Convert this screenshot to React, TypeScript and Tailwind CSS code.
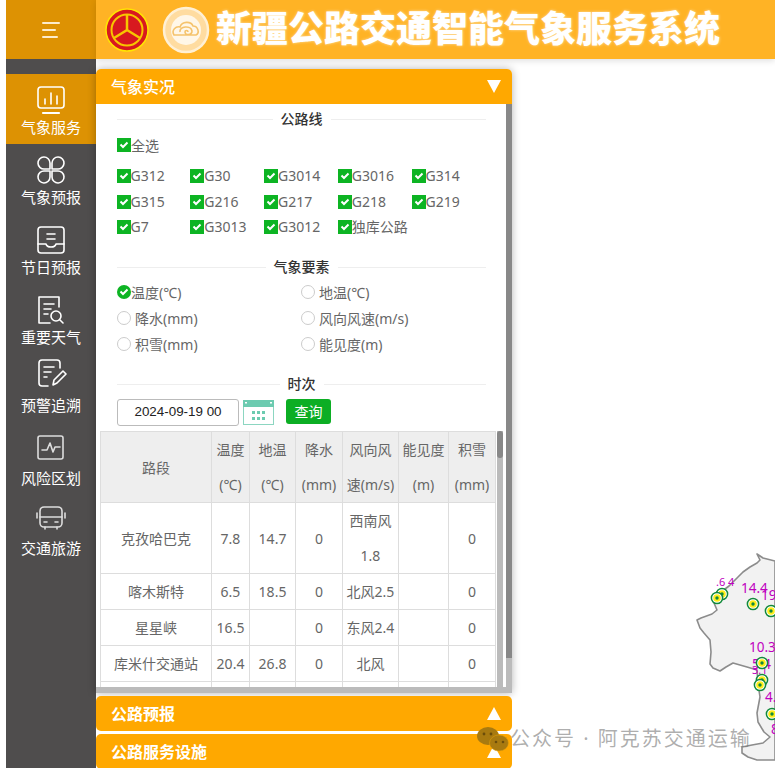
const cjk = "font-['Noto_Sans','Noto_Sans_CJK_SC',sans-serif]";

const MenuIcon = ({ name }: { name: string }) => {
  const common = { width: 32, height: 32, viewBox: "0 0 32 32", fill: "none", stroke: "#fff", strokeWidth: 1.6, strokeLinecap: "round" as const, strokeLinejoin: "round" as const };
  if (name === "chart")
    return (
      <svg {...common}>
        <rect x="3" y="3" width="26" height="21" rx="3" />
        <path d="M10 20v-5M16 20V9M22 20v-8" />
        <path d="M8 29h16" strokeWidth="2.2" />
      </svg>
    );
  if (name === "clover")
    return (
      <svg {...common}>
        <path d="M15 15H9.5a6 6 0 1 1 5.5-6z" />
        <path d="M17 15h5.5a6 6 0 1 0-5.5-6z" />
        <path d="M15 17H9.5a6 6 0 1 0 5.5 6z" />
        <path d="M17 17h5.5a6 6 0 1 1-5.5 6z" />
      </svg>
    );
  if (name === "tray")
    return (
      <svg {...common}>
        <rect x="3" y="3" width="26" height="26" rx="3" />
        <path d="M12 10h8M12 15h8M3 20h8c1 4 9 4 10 0h8" />
      </svg>
    );
  if (name === "search")
    return (
      <svg {...common}>
        <path d="M24 13V3H4v26h11" />
        <path d="M9 10h10M9 15h7M9 20h4" />
        <circle cx="21" cy="22" r="5" />
        <path d="M25 26l3 3" />
      </svg>
    );
  if (name === "edit")
    return (
      <svg {...common}>
        <path d="M25 11V6a3 3 0 0 0-3-3H7a3 3 0 0 0-3 3v20a3 3 0 0 0 3 3h6" />
        <path d="M9 10h10M9 15h7M9 20h3" />
        <path d="M18 28l1-5 9-9 3 3-9 9z" />
      </svg>
    );
  if (name === "pulse")
    return (
      <svg {...common} stroke="#ddd">
        <rect x="3" y="2" width="25" height="23" rx="2" />
        <path d="M7 16h5l3-7 3 9 2-5h5" />
      </svg>
    );
  return (
    <svg {...common} stroke="#ddd">
      <rect x="5" y="3" width="22" height="20" rx="4" />
      <path d="M5 13h22M2 9v5M30 9v5M10 23v2M22 23v2M9 18h3M20 18h3" />
    </svg>
  );
};

const menu = [
  { icon: "chart", label: "气象服务", active: true, pad: "pt-[10px]", gap: "mt-[1px]" },
  { icon: "clover", label: "气象预报", pad: "pt-[10px]", gap: "mt-[1px]" },
  { icon: "tray", label: "节日预报", pad: "pt-[10px]", gap: "mt-[1px]" },
  { icon: "search", label: "重要天气", pad: "pt-[10px]", gap: "mt-[1px]" },
  { icon: "edit", label: "预警追溯", pad: "pt-[3px]", gap: "mt-[6px]" },
  { icon: "pulse", label: "风险区划", pad: "pt-[10px]", gap: "mt-[2px]" },
  { icon: "bus", label: "交通旅游", pad: "pt-[10px]", gap: "mt-[2px]" },
];

const Check = () => (
  <span className="flex h-[14px] w-[14px] shrink-0 items-center justify-center bg-[#0db423]">
    <svg width="10" height="8" viewBox="0 0 10 8" fill="none" stroke="#fff" strokeWidth="2">
      <path d="M1.5 3.5L4 6l4.5-4.5" />
    </svg>
  </span>
);

const Item = ({ label }: { label: string }) => (
  <div className="flex w-[73.75px] items-center text-[14px] leading-[20px] text-[#666]">
    <Check />
    <span className="whitespace-nowrap">{label}</span>
  </div>
);

const Radio = ({ label, on }: { label: string; on?: boolean }) => (
  <div className="flex h-[26px] items-center text-[14px] text-[#666]">
    {on ? (
      <span className="flex h-[14px] w-[14px] items-center justify-center rounded-full bg-[#0db423]">
        <svg width="10" height="8" viewBox="0 0 10 8" fill="none" stroke="#fff" strokeWidth="2">
          <path d="M1.5 3.5L4 6l4.5-4.5" />
        </svg>
      </span>
    ) : (
      <span className="mr-[4px] h-[14px] w-[14px] rounded-full border border-[#ccc] bg-white" />
    )}
    <span className="whitespace-nowrap">{label}</span>
  </div>
);

const Legend = ({ title, cls }: { title: string; cls: string }) => (
  <div className={`flex items-center ${cls}`}>
    <div className="h-px flex-1 bg-[#eee]" />
    <span className="px-[8px] text-[14px] leading-[20px] font-medium text-[#333]">{title}</span>
    <div className="h-px flex-1 bg-[#eee]" />
  </div>
);

const rows = [
  ["克孜哈巴克", "7.8", "14.7", "0", "西南风 1.8", "", "0"],
  ["喀木斯特", "6.5", "18.5", "0", "北风2.5", "", "0"],
  ["星星峡", "16.5", "", "0", "东风2.4", "", "0"],
  ["库米什交通站", "20.4", "26.8", "0", "北风", "", "0"],
  ["", "", "", "", "", "", ""],
];

const heads = ["路段", "温度(℃)", "地温(℃)", "降水(mm)", "风向风速(m/s)", "能见度(m)", "积雪(mm)"];

const AccordionBar = ({ title }: { title: string }) => (
  <div className="flex h-[35px] items-center justify-between rounded-[5px] bg-[#ffa800] pr-[11px] pl-[15px]">
    <span className="text-[16px] font-bold text-white">{title}</span>
    <svg width="14" height="13" viewBox="0 0 14 13"><path d="M7 0l7 13H0z" fill="#fff" /></svg>
  </div>
);

const Marker = ({ x, y }: { x: number; y: number }) => (
  <g>
    <circle cx={x} cy={y} r="5.6" fill="#fff" stroke="#128a3c" strokeWidth="1.5" />
    <circle cx={x} cy={y} r="3.8" fill="#ffef1a" />
    <circle cx={x} cy={y} r="1.7" fill="#128a3c" />
  </g>
);

const MapLayer = () => (
  <svg className="absolute top-[510px] left-[560px]" width="215" height="258" viewBox="560 510 215 258">
    <path
      d="M757 554L763 558L775 561V760H757L748 757L742 753L742 747L752 745L763 743L770 737L764 732L758 722L757 713L760 697L758 684L757 670L747 667L733 663L726 667L720 671L713 668L710 664L711 652L710 640L704 633L700 628L697 620L701 618L712 614L717 610L714 603L712 597L718 593L725 589L729 586L733 582L738 577L743 572L750 567L757 563L760 560Z"
      fill="#f2f2f2"
      stroke="#8c8c8c"
      strokeWidth="1.6"
      strokeLinejoin="round"
    />
    <g fill="#c000c0" fontSize="13.5" fontFamily="Noto Sans, sans-serif">
      <text x="716" y="586" fontSize="11">.6 4</text>
      <text x="741" y="593">14.4</text>
      <text x="761" y="600">19</text>
      <text x="749" y="652">10.3</text>
      <text x="752" y="669">5.4</text>
      <text x="752" y="674" fontSize="11">3.1</text>
      <text x="765" y="702">4.</text>
      <text x="771" y="734">8</text>
    </g>
    <Marker x={722} y={594} />
    <Marker x={717} y={598} />
    <Marker x={753} y={604} />
    <Marker x={771} y={611} />
    <Marker x={762} y={663} />
    <Marker x={762} y={680} />
    <Marker x={760} y={685} />
    <Marker x={772} y={714} />
  </svg>
);

export default function App() {
  return (
    <div className={`relative flex h-[768px] w-[775px] overflow-hidden bg-white pl-[6px] ${cjk}`}>
      {/* Sidebar */}
      <aside className="w-[90px] shrink-0 bg-[#4f4d4d]">
        <div className="flex h-[59px] flex-col items-start justify-center gap-[5px] bg-[#dd9203] pl-[36px]">
          <span className="h-[2px] w-[18px] rounded bg-[#fdeccb]" />
          <span className="h-[2px] w-[14px] rounded bg-[#fdeccb]" />
          <span className="h-[2px] w-[16px] rounded bg-[#fdeccb]" />
        </div>
        <nav className="mt-[15px]">
          {menu.map((m) => (
            <div
              key={m.label}
              className={`flex h-[70px] flex-col items-center ${m.pad} ${m.active ? "bg-[#dd9203]" : ""}`}
            >
              <MenuIcon name={m.icon} />
              <span className={`${m.gap} text-[15px] leading-[20px] text-white`}>{m.label}</span>
            </div>
          ))}
        </nav>
      </aside>

      <main className="flex min-w-0 flex-1 flex-col">
        {/* Title bar */}
        <header className="flex h-[59px] shrink-0 items-center bg-[#ffb325] pl-[9px] shadow-[0_2px_6px_rgba(0,0,0,0.12)]">
          <svg width="44" height="44" viewBox="0 0 44 44">
            <circle cx="22" cy="22" r="21" fill="#d8191f" stroke="#ffe600" strokeWidth="1.5" />
            <circle cx="22" cy="22" r="15.5" fill="none" stroke="#f7c600" strokeWidth="2" />
            <path d="M22 7v15L9 30M22 22l13 8" fill="none" stroke="#f7c600" strokeWidth="2.5" />
          </svg>
          <svg className="ml-[13px]" width="48" height="48" viewBox="0 0 48 48">
            <circle cx="24" cy="24" r="22" fill="#ffdca0" stroke="#fff0d4" strokeWidth="2.5" />
            <circle cx="24" cy="24" r="15" fill="#fff7e8" />
            <path d="M12 29c-3-5 2-9 6-8 2-6 11-6 13-1 5 0 7 7 3 9zM18 26c-1-6 11-7 12-1 0 4-7 5-7 1 0-2 3-2 3 0" fill="none" stroke="#f5c36c" strokeWidth="1.6" />
          </svg>
          <h1 className="-mt-[2px] ml-[6px] text-[36px] leading-none font-black whitespace-nowrap text-white [text-shadow:0_0_3px_rgba(255,255,255,0.6)]">
            新疆公路交通智能气象服务系统
          </h1>
        </header>

        {/* Accordion panel */}
        <section className="mt-[10px] w-[416px] shrink-0 rounded-t-[5px] bg-white shadow-[0_0_8px_rgba(0,0,0,0.3)]">
          <div className="flex h-[35px] items-center justify-between rounded-t-[5px] bg-[#ffa800] pr-[11px] pl-[15px]">
            <span className="text-[16px] font-medium text-white">气象实况</span>
            <svg width="14" height="13" viewBox="0 0 14 13"><path d="M0 0h14L7 13z" fill="#fff" /></svg>
          </div>

          <div className="flex h-[589px]">
            <div className="flex w-[410px] flex-col">
              <div className="h-[583px] overflow-hidden">
                <div className="pr-[20px] pl-[21px]">
                  <Legend title="公路线" cls="mt-[5px]" />
                  <div className="mt-[6px] flex h-[20px] items-center text-[14px] text-[#666]">
                    <Check />
                    <span>全选</span>
                  </div>
                  <div className="mt-[11px] ml-[-0.4px] flex w-[380px] flex-wrap gap-y-[5.5px]">
                    {["G312", "G30", "G3014", "G3016", "G314", "G315", "G216", "G217", "G218", "G219", "G7", "G3013", "G3012", "独库公路"].map((g) => (
                      <Item key={g} label={g} />
                    ))}
                  </div>
                  <Legend title="气象要素" cls="mt-[20px]" />
                  <div className="mt-[2px] grid grid-cols-[184px_185px]">
                    <Radio label="温度(℃)" on />
                    <Radio label="地温(℃)" />
                    <Radio label="降水(mm)" />
                    <Radio label="风向风速(m/s)" />
                    <Radio label="积雪(mm)" />
                    <Radio label="能见度(m)" />
                  </div>
                  <Legend title="时次" cls="mt-[17px]" />
                  <div className="mt-[5px] flex items-start">
                    <div className="flex h-[27px] w-[122px] items-center justify-center rounded-[3px] border border-[#bbb] font-['Liberation_Sans',sans-serif] text-[13.4px] text-[#222]">
                      2024-09-19 00
                    </div>
                    <svg className="mt-[1px] ml-[4px]" width="31" height="25" viewBox="0 0 31 25">
                      <rect x="0.5" y="0.5" width="30" height="24" fill="#fff" stroke="#8cd6c1" />
                      <rect x="0" y="0" width="31" height="7" fill="#6ccbb0" />
                      <rect x="2" y="2" width="2" height="1.5" fill="#fff" />
                      <rect x="27" y="2" width="2" height="1.5" fill="#fff" />
                      <g fill="#6ccbb0">
                        <rect x="9" y="11" width="3" height="3" />
                        <rect x="14" y="11" width="3" height="3" />
                        <rect x="19" y="11" width="3" height="3" />
                        <rect x="9" y="17" width="3" height="3" />
                        <rect x="14" y="17" width="3" height="3" />
                        <rect x="19" y="17" width="3" height="3" />
                      </g>
                    </svg>
                    <button className="ml-[12px] h-[25px] w-[45px] rounded-[3px] bg-[#0cae24] text-[14px] text-white">查询</button>
                  </div>
                </div>

                <div className="mt-[5px] ml-[4px] flex">
                  <table className="w-[395px] table-fixed border-collapse text-center text-[14px] leading-[35px] text-[#666]">
                    <colgroup>
                      <col className="w-[111px]" />
                      <col className="w-[38px]" />
                      <col className="w-[46px]" />
                      <col className="w-[47px]" />
                      <col className="w-[56px]" />
                      <col className="w-[50px]" />
                      <col className="w-[47px]" />
                    </colgroup>
                    <thead>
                      <tr className="bg-[#eee]">
                        {heads.map((h) => (
                          <th key={h} className="border border-[#ddd] p-0 font-normal">{h}</th>
                        ))}
                      </tr>
                    </thead>
                    <tbody>
                      {rows.map((r, i) => (
                        <tr key={i} className={i === 4 ? "h-[36px]" : ""}>
                          {r.map((c, j) => (
                            <td key={j} className="border border-[#ddd] p-0">{c}</td>
                          ))}
                        </tr>
                      ))}
                    </tbody>
                  </table>
                  <div className="ml-[1px] h-[256px] w-[6px] bg-[#bbb]">
                    <div className="h-[27px] rounded-[3px] bg-[#888]" />
                  </div>
                </div>
              </div>
              <div className="h-[6px] shrink-0 bg-[#bbb]" />
            </div>
            <div className="w-[6px] bg-[#bbb]">
              <div className="h-[554px] bg-[#888]" />
            </div>
          </div>
        </section>

        <div className="mt-[3px] flex w-[416px] flex-col gap-[3px]">
          <AccordionBar title="公路预报" />
          <AccordionBar title="公路服务设施" />
        </div>
      </main>

      <MapLayer />

      {/* Watermark */}
      <div className="absolute top-[725px] left-[476px] flex items-center text-[20px] leading-[28px] tracking-[2px] whitespace-nowrap text-[rgba(120,120,120,0.6)]">
        <svg width="34" height="28" viewBox="0 0 34 28">
          <ellipse cx="12" cy="11" rx="11" ry="9" fill="#a87a10" />
          <ellipse cx="23" cy="18" rx="9.5" ry="8" fill="#a87a10" stroke="#e8a20a" strokeWidth="0.5" />
          <circle cx="8" cy="9" r="1.4" fill="#6b4d0a" />
          <circle cx="15" cy="9" r="1.4" fill="#6b4d0a" />
          <circle cx="20" cy="17" r="1.3" fill="#6b4d0a" />
          <circle cx="27" cy="17" r="1.3" fill="#6b4d0a" />
        </svg>
        <span>公众号 · 阿克苏交通运输</span>
      </div>
    </div>
  );
}
